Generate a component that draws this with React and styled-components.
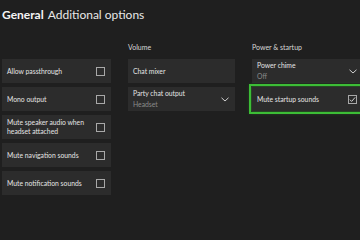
import React from 'react'
import styled, { createGlobalStyle } from 'styled-components'

const GlobalStyle = createGlobalStyle`
  html, body {
    margin: 0;
    padding: 0;
    background: #1f1f1f;
    overflow: hidden;
  }
  body {
    font-family: Lato, "Noto Sans", sans-serif;
    color: #e6e6e6;
  }
`

const Screen = styled.div`
  width: 360px;
  height: 240px;
  background: #1f1f1f;
  overflow: hidden;
`

const Header = styled.h1`
  margin: 0;
  padding: 7px 0 0 2px;
  height: 36px;
  box-sizing: border-box;
  font-size: 12px;
  font-weight: 400;
  line-height: 16px;
  color: #e8e8e8;
  white-space: nowrap;

  b {
    font-weight: 700;
    color: #f4f4f4;
    margin-right: 4px;
  }
`

/* the right column runs past the screen edge, as in the console UI */
const Columns = styled.div`
  display: grid;
  width: 380px;
  grid-template-columns: 109px 107px 1fr;
  column-gap: 17px;
  padding-left: 2px;
`

const Column = styled.div`
  display: flex;
  flex-direction: column;
  gap: 4px;
  min-width: 0;
`

const SectionLabel = styled.div`
  height: 19px;
  font-size: 7px;
  line-height: 9px;
  padding-top: 7px;
  box-sizing: border-box;
  color: #d8d8d8;
`

const Card = styled.div`
  display: flex;
  align-items: center;
  justify-content: space-between;
  box-sizing: border-box;
  height: 24px;
  padding: 0 ${p => (p.$wide ? 25 : 6)}px 0 5px;
  background: #2c2c2c;
  outline: ${p => (p.$focused ? '2px solid #3cbd36' : 'none')};
  outline-offset: 1px;
  box-shadow: ${p => (p.$focused ? '0 0 4px 2px rgba(60, 189, 54, 0.35)' : 'none')};
`

const Texts = styled.div`
  display: flex;
  flex-direction: column;
`

const Label = styled.span`
  font-size: 6.8px;
  line-height: 9px;
  color: #e4e4e4;
`

const Sub = styled.span`
  font-size: 6.8px;
  line-height: 9px;
  margin-top: 2px;
  color: #8a8a8a;
`

const Box = styled.span`
  flex: none;
  width: 7px;
  height: 7px;
  border: 1px solid #a8a8a8;
  display: flex;
  align-items: center;
  justify-content: center;
`

const Check = ({ checked }) => (
  <Box>
    {checked && (
      <svg width="7" height="7" viewBox="0 0 8 8">
        <path d="M1 4.2 L3 6.2 L7 1.6" fill="none" stroke="#e6e6e6" strokeWidth="1" />
      </svg>
    )}
  </Box>
)

const Chevron = () => (
  <svg width="8" height="5" viewBox="0 0 8 5" style={{ flex: 'none' }}>
    <path d="M0.5 0.8 L4 4 L7.5 0.8" fill="none" stroke="#d0d0d0" strokeWidth="1" />
  </svg>
)

const Toggle = ({ label, checked, focused, wide }) => (
  <Card $focused={focused} $wide={wide}>
    <Label>{label}</Label>
    <Check checked={checked} />
  </Card>
)

const Select = ({ label, value, wide }) => (
  <Card $wide={wide}>
    <Texts>
      <Label>{label}</Label>
      <Sub>{value}</Sub>
    </Texts>
    <Chevron />
  </Card>
)

export default function App() {
  return (
    <Screen>
      <GlobalStyle />
      <Header>
        <b>General</b>Additional options
      </Header>
      <Columns>
        <Column>
          <SectionLabel />
          <Toggle label="Allow passthrough" />
          <Toggle label="Mono output" />
          <Toggle label={<>Mute speaker audio when<br />headset attached</>} />
          <Toggle label="Mute navigation sounds" />
          <Toggle label="Mute notification sounds" />
        </Column>
        <Column>
          <SectionLabel>Volume</SectionLabel>
          <Card>
            <Label>Chat mixer</Label>
          </Card>
          <Select label="Party chat output" value="Headset" />
        </Column>
        <Column>
          <SectionLabel>Power &amp; startup</SectionLabel>
          <Select label="Power chime" value="Off" wide />
          <Toggle label="Mute startup sounds" checked focused wide />
        </Column>
      </Columns>
    </Screen>
  )
}
